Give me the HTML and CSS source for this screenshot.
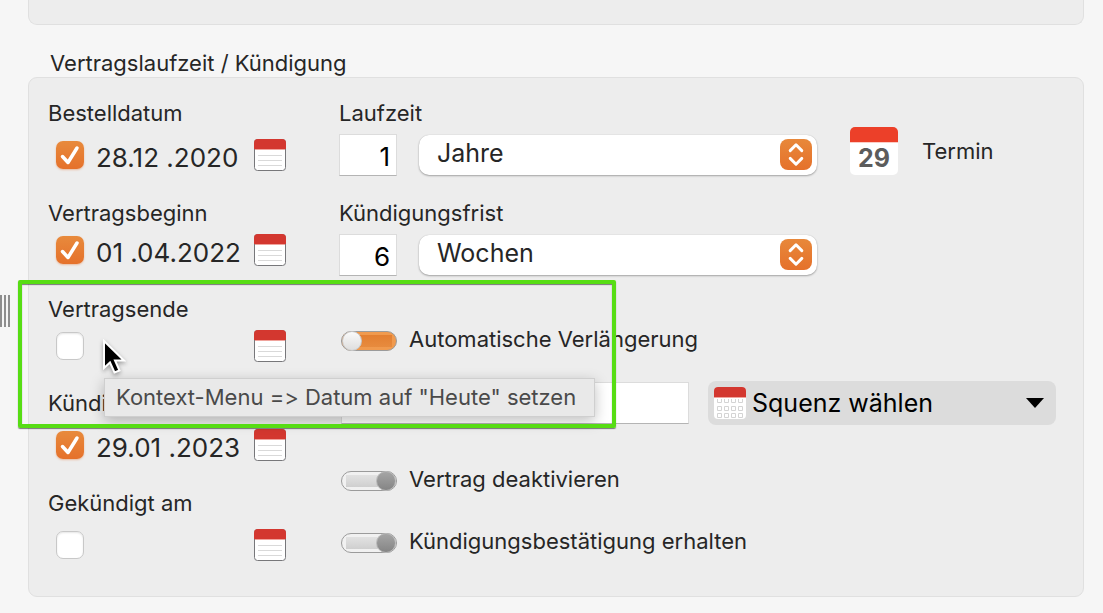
FILE: index.html
```html
<!DOCTYPE html>
<html lang="de">
<head>
    <meta charset="UTF-8">
    <meta name="viewport" content="width=device-width, initial-scale=1.0">
    <title>Vertragslaufzeit / Kündigung</title>
    <link rel="stylesheet" href="styles.css">
</head>
<body>

<!-- Shared icons -->
<svg class="sprite" aria-hidden="true">
    <symbol id="icon-date" viewBox="0 0 32 32">
        <rect x="0.5" y="0.5" width="31" height="31" rx="3" fill="#fff" stroke="#77777a"/>
        <path d="M0 10V4a4 4 0 0 1 4-4h24a4 4 0 0 1 4 4v6z" fill="#d3372f"/>
        <path d="M1 10.5h30" stroke="#f0a39c"/>
        <path d="M4 16.5h24M4 21.5h24M4 26.5h24" stroke="#d9d9d9"/>
    </symbol>
    <symbol id="icon-updown" viewBox="0 0 32 32">
        <path d="M10 12l6-6 6 6M10 20l6 6 6-6" fill="none" stroke="#fff" stroke-width="3" stroke-linecap="round" stroke-linejoin="round"/>
    </symbol>
</svg>

<div class="page">
    <div class="panel panel-top"></div>

    <h2>Vertragslaufzeit / Kündigung</h2>

    <div class="panel panel-main">
        <!-- Dates -->
        <div class="dates">
            <div class="date-field">
                <label for="order-date">Bestelldatum</label>
                <div class="date-row">
                    <input type="checkbox" aria-label="Bestelldatum aktiv" checked>
                    <input class="date" id="order-date" type="text" value="28.12 .2020">
                    <button class="icon-button" aria-label="Kalender"><svg><use href="#icon-date"/></svg></button>
                </div>
            </div>
            <div class="date-field tight">
                <label for="start-date">Vertragsbeginn</label>
                <div class="date-row">
                    <input type="checkbox" aria-label="Vertragsbeginn aktiv" checked>
                    <input class="date" id="start-date" type="text" value="01 .04.2022">
                    <button class="icon-button" aria-label="Kalender"><svg><use href="#icon-date"/></svg></button>
                </div>
            </div>
            <div class="date-field tight">
                <label for="end-date">Vertragsende</label>
                <div class="date-row">
                    <input type="checkbox" aria-label="Vertragsende aktiv">
                    <input class="date" id="end-date" type="text">
                    <button class="icon-button" aria-label="Kalender"><svg><use href="#icon-date"/></svg></button>
                </div>
            </div>
            <div class="date-field">
                <label for="cancel-date">Kündi</label>
                <div class="date-row">
                    <input type="checkbox" aria-label="Kündigung aktiv" checked>
                    <input class="date" id="cancel-date" type="text" value="29.01 .2023">
                    <button class="icon-button" aria-label="Kalender"><svg><use href="#icon-date"/></svg></button>
                </div>
            </div>
            <div class="date-field">
                <label for="cancelled-date">Gekündigt am</label>
                <div class="date-row">
                    <input type="checkbox" aria-label="Gekündigt am aktiv">
                    <input class="date" id="cancelled-date" type="text">
                    <button class="icon-button" aria-label="Kalender"><svg><use href="#icon-date"/></svg></button>
                </div>
            </div>
        </div>

        <!-- Terms and options -->
        <div class="options">
            <div class="terms">
                <div class="term-list">
                    <div class="term">
                        <label for="duration">Laufzeit</label>
                        <div class="term-row">
                            <input class="box number" id="duration" type="text" value="1">
                            <div class="select">
                                <select aria-label="Einheit der Laufzeit">
                                    <option>Jahre</option>
                                </select>
                                <svg class="arrows"><use href="#icon-updown"/></svg>
                            </div>
                        </div>
                    </div>
                    <div class="term">
                        <label for="notice">Kündigungsfrist</label>
                        <div class="term-row">
                            <input class="box number" id="notice" type="text" value="6">
                            <div class="select">
                                <select aria-label="Einheit der Kündigungsfrist">
                                    <option>Wochen</option>
                                </select>
                                <svg class="arrows"><use href="#icon-updown"/></svg>
                            </div>
                        </div>
                    </div>
                </div>
                <button class="appointment">
                    <span class="day">29</span>
                    Termin
                </button>
            </div>

            <label class="switch">
                <input type="checkbox" class="toggle" checked>
                Automatische Verlängerung
            </label>

            <div class="sequence-row">
                <input class="box" type="text" aria-label="Sequenz">
                <button class="sequence">
                    <svg class="calendar" viewBox="0 0 32 32">
                        <rect width="32" height="32" rx="4" fill="#fff"/>
                        <path d="M0 10V4a4 4 0 0 1 4-4h24a4 4 0 0 1 4 4v6z" fill="#d3372f"/>
                        <path d="M0 10.5h32" stroke="#f0a39c"/>
                        <g fill="none" stroke="#d4d4d4">
                            <path d="M3.5 12v3.5h4V12M10.5 12v3.5h4V12M17.5 12v3.5h4V12M24.5 12v3.5h4V12"/>
                            <path d="M3.5 19.5h4v4h-4zM10.5 19.5h4v4h-4zM17.5 19.5h4v4h-4zM24.5 19.5h4v4h-4z"/>
                            <path d="M3.5 26.5h4v4h-4zM10.5 26.5h4v4h-4zM17.5 26.5h4v4h-4zM24.5 26.5h4v4h-4z"/>
                        </g>
                    </svg>
                    <span class="sequence-text">Squenz wählen</span>
                    <svg class="caret" viewBox="0 0 18 10"><path d="M0 0h18L9 10z"/></svg>
                </button>
            </div>

            <label class="switch">
                <input type="checkbox" class="toggle">
                Vertrag deaktivieren
            </label>
            <label class="switch">
                <input type="checkbox" class="toggle">
                Kündigungsbestätigung erhalten
            </label>
        </div>

        <!-- Tooltip, pointer and highlight over the form -->
        <div class="tooltip" role="tooltip">Kontext-Menu =&gt; Datum auf "Heute" setzen</div>
        <div class="highlight"></div>
        <svg class="pointer" viewBox="0 0 24 36">
            <path d="M2 2v27l6-5.5 4.5 10 5-2-4.5-10h9z" fill="#000" stroke="#fff" stroke-width="2"/>
        </svg>
    </div>

    <!-- Splitter grip -->
    <div class="grip"></div>
</div>

</body>
</html>
```

FILE: styles.css
```css
* {
    box-sizing: border-box;
}

body {
    margin: 0;
    background: #f6f6f6;
    color: #262626;
    font-family: Inter, "Liberation Sans", sans-serif;
    font-size: 22px;
    line-height: 26px;
}

input,
select,
button {
    margin: 0;
    padding: 0;
    border: none;
    background: none;
    color: inherit;
    font: inherit;
}

svg {
    display: block;
}

.sprite {
    position: absolute;
    width: 0;
    height: 0;
}

.page {
    position: relative;
    padding: 0 19px 16px 28px;
}

/* Panels */
.panel {
    background: #ededed;
    border: 1px solid #e0e0e0;
    border-radius: 9px;
}

.panel-top {
    height: 25px;
    border-top: none;
    border-radius: 0 0 9px 9px;
}

h2 {
    margin: 0;
    padding: 25px 22px 1px;
    font-size: 22px;
    font-weight: 400;
}

.panel-main {
    position: relative;
    display: grid;
    grid-template-columns: 291px 1fr;
    padding: 22px 27px 35px 19px;
}

/* Date column */
.dates {
    display: grid;
    grid-template-rows: 100px 96px 94px 100px auto;
}

.date-field {
    display: flex;
    flex-direction: column;
    gap: 13px;
}

.date-field.tight {
    gap: 8px;
}

.date-row {
    display: flex;
    align-items: center;
    padding-left: 8px;
}

.date-row input[type="checkbox"] {
    appearance: none;
    width: 28px;
    height: 28px;
    border: 1px solid #c8c8c8;
    border-radius: 7px;
    background: #fff;
    box-shadow: inset 0 1px 2px rgba(0, 0, 0, 0.1);
}

.date-row input[type="checkbox"]:checked {
    border: none;
    background: url("data:image/svg+xml,%3Csvg xmlns='http://www.w3.org/2000/svg' viewBox='0 0 28 28'%3E%3Cpath d='M6.5 15.5l5.5 6L21 7' fill='none' stroke='%23fff' stroke-width='3.5' stroke-linecap='round' stroke-linejoin='round'/%3E%3C/svg%3E"), linear-gradient(#e88a3c, #e5712b);
    box-shadow: 0 1px 2px rgba(229, 113, 43, 0.4);
}

.date {
    width: 170px;
    height: 32px;
    padding: 5px 0 0 12px;
    font-size: 26px;
}

.icon-button,
.icon-button svg {
    width: 32px;
    height: 32px;
}

/* Options column */
.options {
    display: flex;
    flex-direction: column;
}

.terms {
    display: flex;
    gap: 33px;
    margin-bottom: 48px;
}

.term-list {
    flex: 1;
    display: flex;
    flex-direction: column;
    gap: 24px;
}

.term {
    display: flex;
    flex-direction: column;
    gap: 8px;
}

.term-row {
    display: flex;
    align-items: center;
    gap: 22px;
}

.box {
    height: 42px;
    border: 1px solid #dcdcdc;
    border-bottom-color: #b4b4b4;
    background: #fff;
}

.number {
    width: 58px;
    padding: 2px 6px 0 0;
    color: #000;
    font-size: 26px;
    text-align: right;
}

.select {
    position: relative;
    flex: 1;
}

.select select {
    appearance: none;
    display: block;
    width: 100%;
    height: 40px;
    padding: 0 44px 4px 18px;
    border-radius: 10px;
    background: #fff;
    box-shadow: 0 1px 2px rgba(0, 0, 0, 0.3), 0 0 1px rgba(0, 0, 0, 0.2);
    font-size: 25px;
}

.arrows {
    position: absolute;
    top: 4px;
    right: 5px;
    width: 32px;
    height: 31px;
    border-radius: 8px;
    background: linear-gradient(#e8883a, #e5712b);
    pointer-events: none;
}

.appointment {
    display: flex;
    align-self: flex-start;
    align-items: center;
    gap: 24px;
    width: 206px;
    margin-top: 27px;
}

.day {
    width: 48px;
    height: 48px;
    padding-top: 18px;
    border-radius: 5px;
    background: linear-gradient(#ec4029 15px, #f79a8c 15px, #fff 16px);
    color: #5c5c5c;
    font-size: 25px;
    font-weight: 700;
}

/* Switches */
.switch {
    display: flex;
    align-items: center;
    gap: 12px;
    height: 30px;
    padding-left: 2px;
}

.toggle {
    appearance: none;
    display: flex;
    align-items: center;
    justify-content: flex-end;
    width: 56px;
    height: 20px;
    margin-top: 4px;
    border: 1px solid #9b9b9b;
    border-radius: 10px;
    background: linear-gradient(#e2e2e2, #cfcfcf) 4px 3px / 40px 12px no-repeat #f1f1f1;
}

.toggle::before {
    content: "";
    width: 18px;
    height: 18px;
    border: 1px solid #b9b9b9;
    border-radius: 50%;
    background: linear-gradient(#a5a5a5, #858585);
}

.toggle:checked {
    justify-content: flex-start;
    background: linear-gradient(#e37f31, #e78b3e) 8px 3px / 42px 12px no-repeat #f09a4e;
}

.toggle:checked::before {
    border-color: #c9c9c9;
    background: linear-gradient(#fafafa, #dedede);
}

.sequence-row {
    display: grid;
    grid-template-columns: 1fr 1fr;
    align-items: center;
    gap: 19px;
    margin: 27px 0 39px;
    padding-left: 2px;
}

.sequence-row .box {
    width: 100%;
}

.sequence {
    display: flex;
    align-items: center;
    gap: 6px;
    height: 44px;
    padding: 0 12px 0 6px;
    border-radius: 8px;
    background: #dcdcdc;
    color: #000;
    font-size: 25px;
    text-align: left;
}

.sequence-text {
    flex: 1;
}

.calendar {
    width: 32px;
    height: 32px;
}

.caret {
    width: 18px;
    height: 10px;
}

.switch + .switch {
    margin-top: 32px;
}

/* Overlays */
.tooltip {
    position: absolute;
    top: 300px;
    left: 75px;
    width: 491px;
    height: 39px;
    padding: 5px 11px;
    border: 1px solid #cfcfcf;
    background: #e9e9e9;
    box-shadow: 0 4px 14px rgba(0, 0, 0, 0.25);
    color: #4a4a4a;
    font-feature-settings: "calt" 0;
    white-space: nowrap;
}

.highlight {
    position: absolute;
    top: 202px;
    left: -11px;
    width: 598px;
    height: 148px;
    border: 4px solid #57dd14;
    border-radius: 2px;
    box-shadow: 0 1px 1px rgba(0, 0, 0, 0.5), inset 0 1px 1px rgba(0, 0, 0, 0.5);
    pointer-events: none;
}

.pointer {
    position: absolute;
    top: 261px;
    left: 73px;
    width: 24px;
    height: 36px;
    filter: drop-shadow(0 2px 2px rgba(0, 0, 0, 0.35));
    pointer-events: none;
}

.grip {
    position: absolute;
    top: 295px;
    left: 0;
    width: 10px;
    height: 32px;
    background: repeating-linear-gradient(90deg, #8e8e8e 0 2px, #f6f6f6 2px 4px);
}
```
